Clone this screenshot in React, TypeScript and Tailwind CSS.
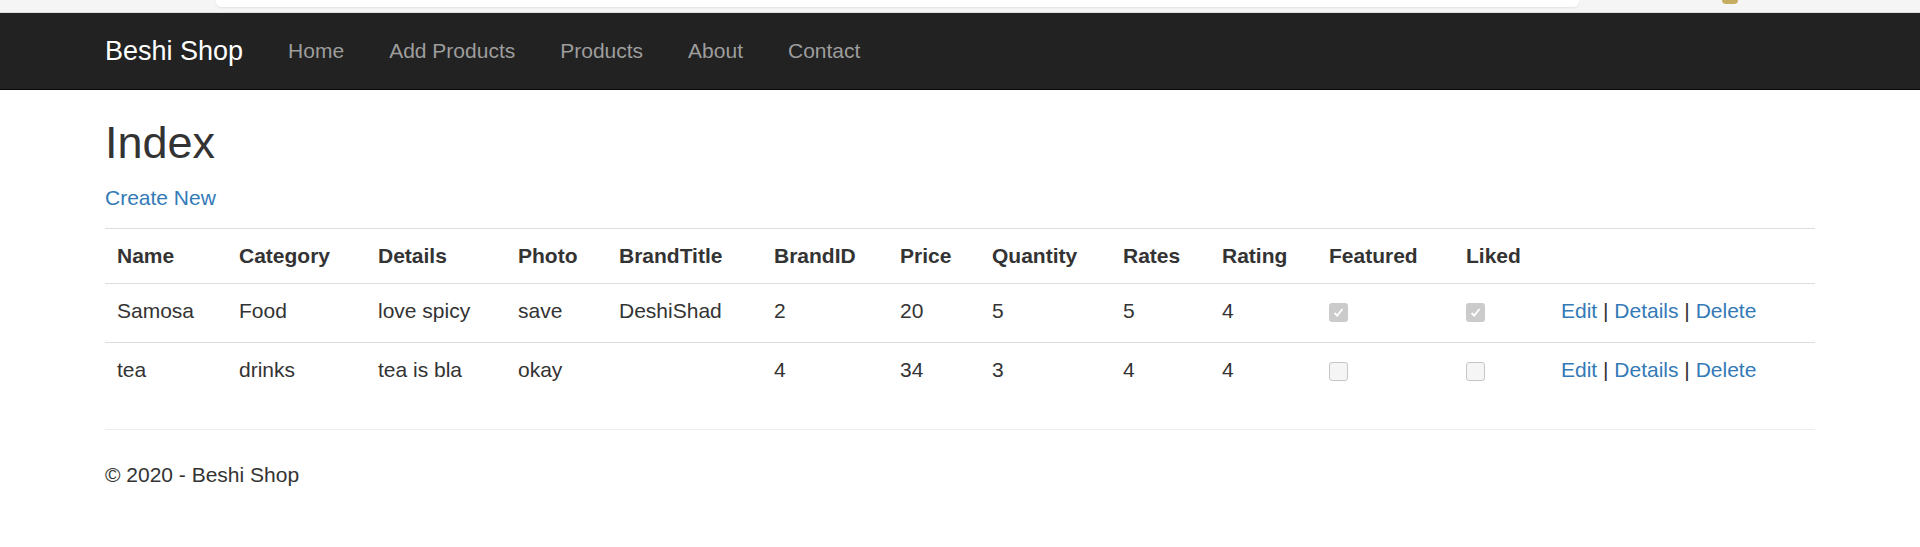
const products = [
  {
    name: "Samosa",
    category: "Food",
    details: "love spicy",
    photo: "save",
    brandTitle: "DeshiShad",
    brandId: 2,
    price: 20,
    quantity: 5,
    rates: 5,
    rating: 4,
    featured: true,
    liked: true,
  },
  {
    name: "tea",
    category: "drinks",
    details: "tea is bla",
    photo: "okay",
    brandTitle: "",
    brandId: 4,
    price: 34,
    quantity: 3,
    rates: 4,
    rating: 4,
    featured: false,
    liked: false,
  },
];

const headers = [
  "Name",
  "Category",
  "Details",
  "Photo",
  "BrandTitle",
  "BrandID",
  "Price",
  "Quantity",
  "Rates",
  "Rating",
  "Featured",
  "Liked",
  "",
];

const colWidths = [122, 139, 140, 101, 155, 126, 92, 131, 99, 107, 137, 95, 266];

function CheckBox({ checked }: { checked: boolean }) {
  if (checked) {
    return (
      <span className="inline-block w-[19px] h-[19px] align-[-4px] rounded-[3px] bg-[#cbcbcb] p-[3px]">
        <svg className="block" width="13" height="13" viewBox="0 0 13 13" fill="none">
          <path d="M2.5 7 L5.2 9.6 L10.5 3" stroke="#fff" strokeWidth="1.8" />
        </svg>
      </span>
    );
  }
  return (
    <span className="inline-block w-[19px] h-[19px] align-[-4px] rounded-[3px] border border-[#c6c6c6] bg-[#f5f5f5]" />
  );
}

export default function App() {
  return (
    <div className="min-h-screen bg-white font-['Liberation_Sans',Arial,sans-serif] text-[21px] leading-[30px] text-[#333]">
      {/* browser chrome sliver */}
      <div className="flex h-[13px] bg-[#f5f5f5] border-b border-[#dedede]">
        <div className="ml-[216px] w-[1363px] h-[7px] bg-white rounded-b-[5px] shadow-[0_1px_2px_rgba(0,0,0,0.08)]" />
        <div className="ml-[143px] w-[16px] h-[4px] rounded-b-full bg-[#c7ad62]" />
      </div>

      {/* Navbar */}
      <nav className="h-[77px] bg-[#222] border-b border-[#080808]">
        <div className="mx-auto w-[1755px] px-[22.5px] h-full flex items-center">
          <a className="text-[27px] text-white pr-[22.5px]">Beshi Shop</a>
          <ul className="flex">
            {["Home", "Add Products", "Products", "About", "Contact"].map((item) => (
              <li key={item} className="px-[22.5px] text-[#9d9d9d]">
                {item}
              </li>
            ))}
          </ul>
        </div>
      </nav>

      <div className="mx-auto w-[1755px] px-[22.5px]">
        <h2 className="mt-[28px] mb-[15px] text-[45px] leading-[49.5px]">Index</h2>
        <p className="mb-[15px]">
          <a className="text-[#337ab7]">Create New</a>
        </p>

        <table className="w-full table-fixed border-collapse mb-[28px]">
          <colgroup>
            {colWidths.map((w, i) => (
              <col key={i} style={{ width: w }} />
            ))}
          </colgroup>
          <tbody>
            <tr className="border-t border-[#ddd]">
              {headers.map((h, i) => (
                <th key={i} className="px-[12px] pt-[12px] pb-[12px] text-left align-top font-bold">
                  {h}
                </th>
              ))}
            </tr>
            {products.map((p) => (
              <tr key={p.name} className="border-t border-[#ddd]">
                <td className="px-[12px] pt-[12px] pb-[16px] align-top">{p.name}</td>
                <td className="px-[12px] pt-[12px] pb-[16px] align-top">{p.category}</td>
                <td className="px-[12px] pt-[12px] pb-[16px] align-top">{p.details}</td>
                <td className="px-[12px] pt-[12px] pb-[16px] align-top">{p.photo}</td>
                <td className="px-[12px] pt-[12px] pb-[16px] align-top">{p.brandTitle}</td>
                <td className="px-[12px] pt-[12px] pb-[16px] align-top">{p.brandId}</td>
                <td className="px-[12px] pt-[12px] pb-[16px] align-top">{p.price}</td>
                <td className="px-[12px] pt-[12px] pb-[16px] align-top">{p.quantity}</td>
                <td className="px-[12px] pt-[12px] pb-[16px] align-top">{p.rates}</td>
                <td className="px-[12px] pt-[12px] pb-[16px] align-top">{p.rating}</td>
                <td className="px-[12px] pt-[12px] pb-[16px] align-top">
                  <CheckBox checked={p.featured} />
                </td>
                <td className="px-[12px] pt-[12px] pb-[16px] align-top">
                  <CheckBox checked={p.liked} />
                </td>
                <td className="px-[12px] pt-[12px] pb-[16px] align-top whitespace-nowrap">
                  <a className="text-[#337ab7]">Edit</a> |{" "}
                  <a className="text-[#337ab7]">Details</a> |{" "}
                  <a className="text-[#337ab7]">Delete</a>
                </td>
              </tr>
            ))}
          </tbody>
        </table>

        <hr className="border-0 border-t border-[#eee] mb-[30px]" />
        <footer>
          <p>© 2020 - Beshi Shop</p>
        </footer>
      </div>
    </div>
  );
}
